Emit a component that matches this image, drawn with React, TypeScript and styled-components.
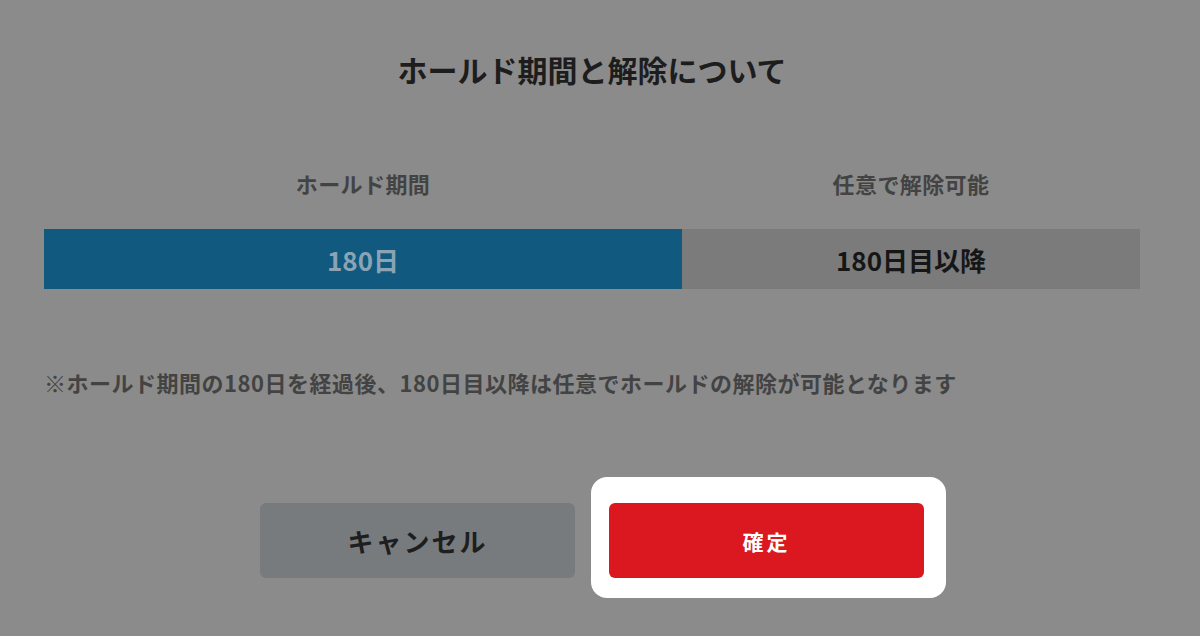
import React from 'react';
import styled, { createGlobalStyle } from 'styled-components';

const GlobalStyle = createGlobalStyle`
  html, body {
    margin: 0;
    padding: 0;
    background: #8b8b8b;
  }
  body {
    font-family: "Noto Sans CJK JP", "Noto Sans", "Liberation Sans", sans-serif;
  }
`;

const Page = styled.div`
  width: 1200px;
  height: 636px;
  background: #8b8b8b;
  overflow: hidden;
`;

const Dialog = styled.div`
  width: 1096px;
  margin-left: 44px;
  padding-top: 51px;
  display: flex;
  flex-direction: column;
`;

const Title = styled.h2`
  margin: 0;
  text-align: center;
  font-size: 30px;
  line-height: 36px;
  font-weight: 700;
  color: #1d1d1d;
`;

const Segments = styled.div`
  display: grid;
  grid-template-columns: 638px 458px;
`;

const Labels = styled(Segments)`
  margin-top: 80px;
`;

const Label = styled.div`
  text-align: center;
  font-size: 22px;
  line-height: 32px;
  font-weight: 700;
  color: #434343;
  letter-spacing: 0.4px;
`;

const Bar = styled(Segments)`
  margin-top: 30px;
  height: 60px;
`;

const Segment = styled.div<{ $bg: string; $fg: string }>`
  display: flex;
  align-items: center;
  justify-content: center;
  background: ${(p) => p.$bg};
  color: ${(p) => p.$fg};
  font-size: 26px;
  font-weight: 700;
`;

const Note = styled.p`
  margin: 77px 0 0;
  font-size: 22px;
  line-height: 32px;
  font-weight: 700;
  color: #434343;
  letter-spacing: 0.5px;
`;

const Actions = styled.div`
  margin-top: 105px;
  display: flex;
  justify-content: center;
  gap: 34px;
`;

const Button = styled.button<{ $variant: 'cancel' | 'confirm' }>`
  width: 315px;
  height: 75px;
  border: none;
  border-radius: 6px;
  font-family: inherit;
  font-weight: 700;
  cursor: pointer;
  background: ${(p) => (p.$variant === 'confirm' ? '#db1820' : '#787b7e')};
  color: ${(p) => (p.$variant === 'confirm' ? '#ffffff' : '#1e1e1e')};
  font-size: ${(p) => (p.$variant === 'confirm' ? '21px' : '26px')};
  letter-spacing: ${(p) => (p.$variant === 'confirm' ? '3px' : '2px')};
`;

// 確定ボタンのハイライト（白い枠）
const Spotlight = styled.div`
  position: relative;
  z-index: 0;
  &::before {
    content: '';
    position: absolute;
    top: -26px;
    bottom: -20px;
    left: -18px;
    right: -22px;
    background: #ffffff;
    border-radius: 16px;
    z-index: -1;
  }
`;

export default function App() {
  return (
    <Page>
      <GlobalStyle />
      <Dialog>
        <Title>ホールド期間と解除について</Title>
        <Labels>
          <Label>ホールド期間</Label>
          <Label>任意で解除可能</Label>
        </Labels>
        <Bar>
          <Segment $bg="#11597e" $fg="#8aa4b5">180日</Segment>
          <Segment $bg="#7b7b7b" $fg="#161616">180日目以降</Segment>
        </Bar>
        <Note>※ホールド期間の180日を経過後、180日目以降は任意でホールドの解除が可能となります</Note>
        <Actions>
          <Button $variant="cancel">キャンセル</Button>
          <Spotlight>
            <Button $variant="confirm">確定</Button>
          </Spotlight>
        </Actions>
      </Dialog>
    </Page>
  );
}
